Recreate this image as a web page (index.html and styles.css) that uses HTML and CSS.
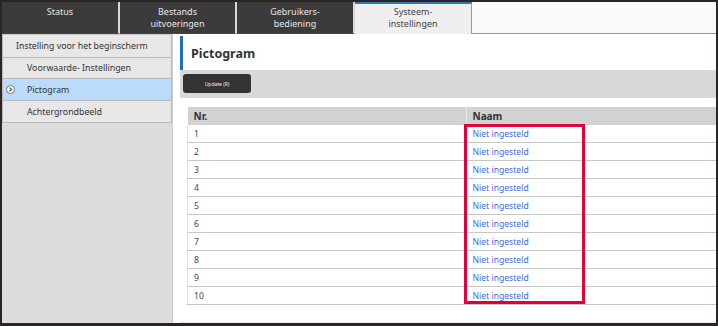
FILE: index.html
```html
<!DOCTYPE html>
<html lang="nl">

<head>
  <meta charset="UTF-8">
  <title>Pictogram</title>
  <link rel="stylesheet" href="styles.css">
</head>

<body>
  <div class="frame">
    <div class="tabs">
      <div class="tab">Status</div>
      <div class="tab">Bestands<br>uitvoeringen</div>
      <div class="tab">Gebruikers-<br>bediening</div>
      <div class="tab active">Systeem-<br>instellingen</div>
      <div class="tab-rest"></div>
    </div>

    <div class="body">
      <div class="side">
        <div class="item top">Instelling voor het beginscherm</div>
        <div class="item">Voorwaarde- Instellingen</div>
        <div class="item sel"><span class="arrow"><svg width="9" height="9" viewBox="0 0 9 9"><circle cx="4.5" cy="4.5" r="4" fill="#fff" stroke="#777" stroke-width="1"/><path d="M3.6 2.6 L5.5 4.5 L3.6 6.4" fill="none" stroke="#555" stroke-width="1.3"/></svg></span>Pictogram</div>
        <div class="item">Achtergrondbeeld</div>
      </div>

      <div class="main">
        <div class="head"><h1>Pictogram</h1></div>
        <div class="bar"><button class="btn">Update (R)</button></div>

        <div class="list">
          <table>
            <tr><th class="nr">Nr.</th><th>Naam</th></tr>
            <tr><td class="nr">1</td><td><a>Niet ingesteld</a></td></tr>
            <tr><td class="nr">2</td><td><a>Niet ingesteld</a></td></tr>
            <tr><td class="nr">3</td><td><a>Niet ingesteld</a></td></tr>
            <tr><td class="nr">4</td><td><a>Niet ingesteld</a></td></tr>
            <tr><td class="nr">5</td><td><a>Niet ingesteld</a></td></tr>
            <tr><td class="nr">6</td><td><a>Niet ingesteld</a></td></tr>
            <tr><td class="nr">7</td><td><a>Niet ingesteld</a></td></tr>
            <tr><td class="nr">8</td><td><a>Niet ingesteld</a></td></tr>
            <tr><td class="nr">9</td><td><a>Niet ingesteld</a></td></tr>
            <tr><td class="nr">10</td><td><a>Niet ingesteld</a></td></tr>
          </table>
          <div class="mark"></div>
        </div>
      </div>
    </div>
  </div>
</body>

</html>
```

FILE: styles.css
```css
body {
  margin: 0;
  background: #fff;
  font-family: "Noto Sans", "Open Sans", sans-serif;
}

.frame {
  width: 718px;
  height: 326px;
  box-sizing: border-box;
  border: 2px solid #2b2624;
  border-bottom-width: 3px;
  display: flex;
  flex-direction: column;
  overflow: hidden;
}

.tabs {
  display: flex;
  height: 32px;
  flex: none;
}

.tab {
  width: 118px;
  background: #3b3b3b;
  color: #e6e6e6;
  font-size: 9px;
  line-height: 11.5px;
  text-align: center;
  padding-top: 4px;
  box-sizing: border-box;
  border-right: 2px solid #d8d8d8;
  border-bottom: 1px solid #444;
}

.tab:nth-child(2) {
  width: 117px;
}

.tab.active {
  width: 117px;
  background: #efefef;
  color: #444;
  border-top: 2px solid #2a78c2;
  border-right: 1px solid #9a9a9a;
  border-bottom: none;
  padding-top: 2px;
}

.tab-rest {
  flex: 1;
  background: #fafafa;
  border-bottom: 1px solid #9a9a9a;
}

.body {
  display: flex;
  flex: 1;
}

.side {
  width: 170px;
  background: #dddddd;
  border-right: 1px solid #cfcfcf;
  flex: none;
}

.item {
  height: 21px;
  box-sizing: border-box;
  border: 1px solid #b9b9b9;
  border-top: none;
  background: #e7e7e7;
  color: #333;
  font-size: 8.8px;
  line-height: 20px;
  padding-left: 24px;
  display: flex;
  align-items: center;
}

.item.top {
  height: 24px;
  padding-left: 13px;
  border-top: 1px solid #c8c8c8;
}

.item.sel {
  background: #badbfa;
  padding-left: 3px;
  height: 22px;
}

.item:last-child {
  height: 22px;
}

.arrow {
  display: inline-flex;
  width: 21px;
}

.main {
  flex: 1;
  margin-left: 7px;
  border-bottom: 1px solid #e6e6e6;
}

.head {
  height: 34px;
  border-left: 3px solid #1f6fb8;
  margin-top: 2px;
  display: flex;
  align-items: center;
  padding-left: 8px;
}

h1 {
  margin: 0;
  font-size: 12.5px;
  font-weight: bold;
  color: #333;
}

.bar {
  height: 28px;
  background: #d8d8d8;
  padding: 4px 0 0 3px;
  box-sizing: border-box;
  display: flex;
  align-items: flex-start;
}

.btn {
  width: 68px;
  height: 19px;
  border: none;
  border-radius: 3px;
  background: #333;
  color: #eee;
  font-family: "Noto Sans", sans-serif;
  font-size: 5px;
  padding: 0;
}

.list {
  position: relative;
  margin: 9px 0 0 7px;
}

table {
  width: 100%;
  border-collapse: collapse;
  font-size: 8.6px;
}

th {
  height: 18px;
  background: #d2d2d2;
  color: #333;
  text-align: left;
  padding: 0 6px;
  font-size: 10px;
  border-left: 1px solid #e6e6e6;
}

th.nr {
  width: 266px;
  border-left: none;
}

td {
  height: 17px;
  padding: 0 6px;
  border-bottom: 1px solid #c8c8c8;
  border-left: 1px solid #e3e3e3;
}

td.nr {
  color: #3a4866;
}

a {
  color: #3f6ad8;
}

.mark {
  position: absolute;
  left: 277px;
  top: 17px;
  width: 121px;
  height: 180px;
  box-sizing: border-box;
  border: 3px solid #e0003a;
}
```
